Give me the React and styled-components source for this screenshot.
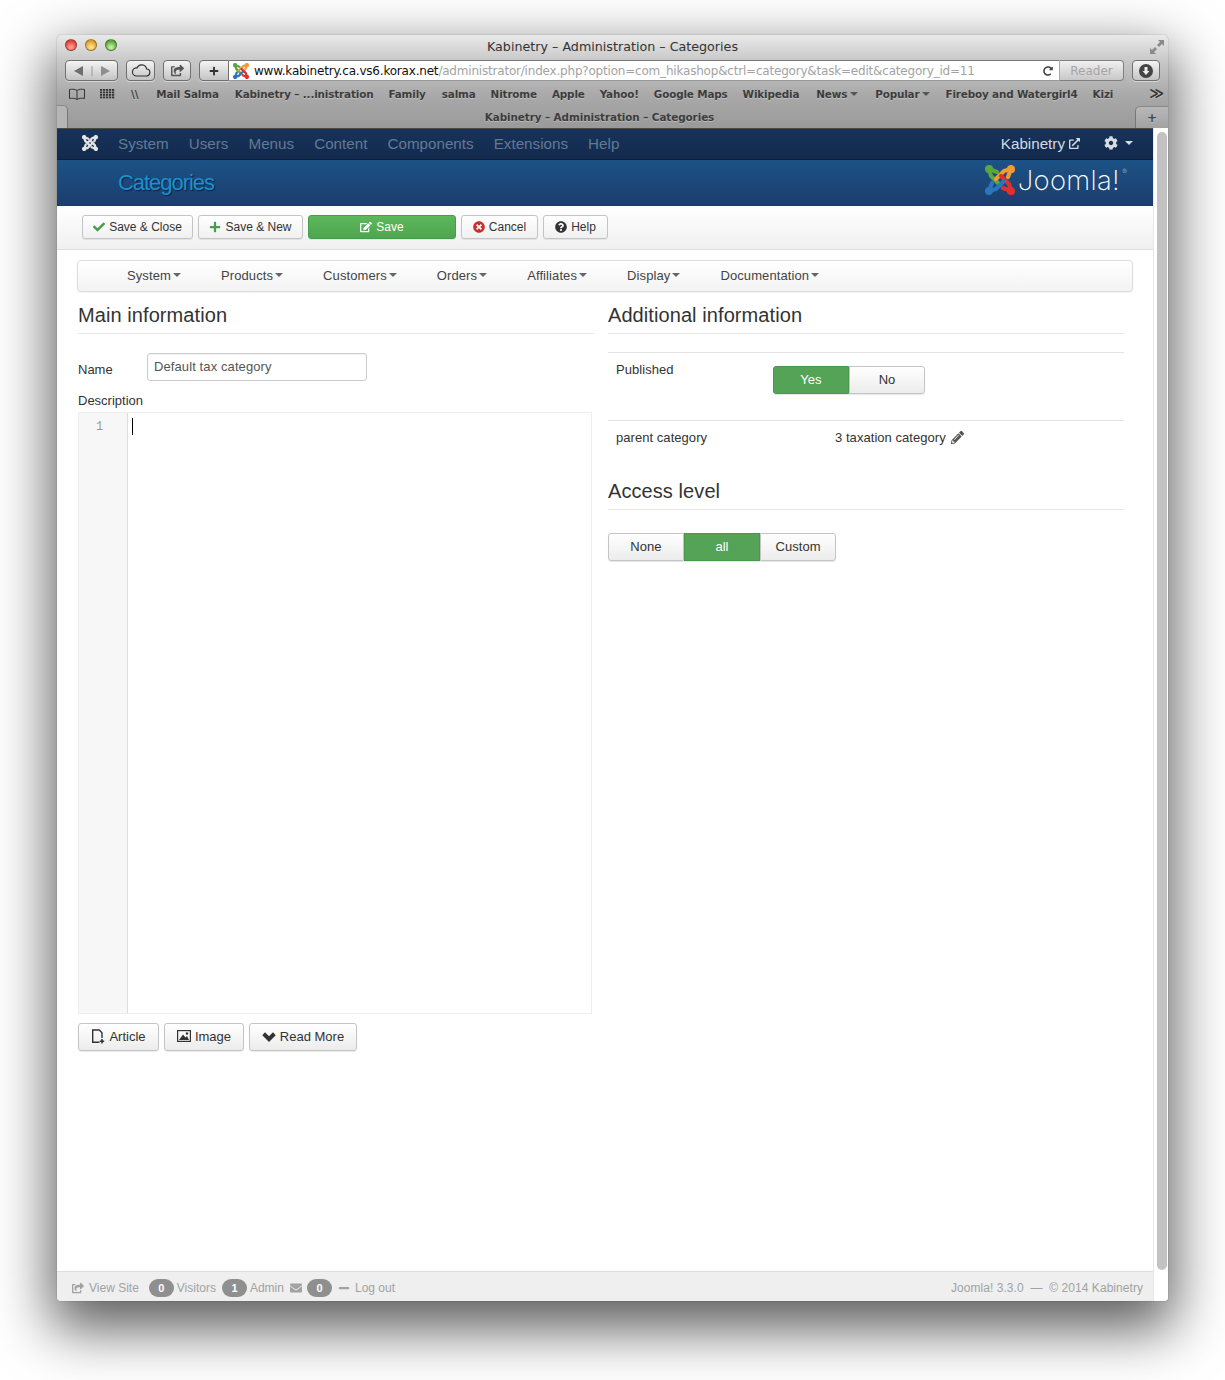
import React from "react";
import styled, { createGlobalStyle } from "styled-components";
import {
  FaCheck, FaPlus, FaEdit, FaTimesCircle, FaQuestionCircle, FaCog, FaExternalLinkAlt,
  FaShareSquare, FaEnvelope, FaMinus, FaPencilAlt, FaRedoAlt,
} from "react-icons/fa";

const Global = createGlobalStyle`
  html, body { margin: 0; padding: 0; background: #fff; }
  body { height: 1380px; overflow: hidden; font-family: "Liberation Sans", Arial, sans-serif; color: #333; }
  * { box-sizing: border-box; }
`;

const Stage = styled.div`padding: 35px 57px 0;`;
const Shadowed = styled.div`border-radius: 5px; box-shadow: 0 22px 56px 6px rgba(0,0,0,.64); width: 1111px;`;
const Win = styled.div`
  width: 1111px; height: 1266px; display: flex; flex-direction: column;
  border-radius: 5px 5px 4px 4px; overflow: hidden; box-shadow: 0 0 1px rgba(0,0,0,.6);
`;

const Chrome = styled.div`
  height: 93px; flex: none; font-family: "DejaVu Sans", sans-serif;
  background: linear-gradient(#e9e9e9 0, #c9c9c9 25px, #a9a9a9 60px, #9a9a9a 93px);
  display: flex; flex-direction: column;
`;
const TitleRow = styled.div`height: 23px; display: flex; align-items: center; padding: 0 4px 0 8px;`;
const TitleSide = styled.div`
  flex: 1; display: flex; gap: 8px; align-items: center; justify-content: ${p => (p.$end ? "flex-end" : "flex-start")};
  margin-top: ${p => p.$mt || 0}px;
`;
const Light = styled.span`
  width: 12px; height: 12px; border-radius: 50%; border: 1px solid rgba(0,0,0,.35);
  background: radial-gradient(circle at 50% 75%, ${p => p.$hi} 10%, ${p => p.$c} 70%);
`;
const WinTitle = styled.div`font-size: 12.7px; color: #333; white-space: nowrap; margin-right: 4px;`;
const AddrRow = styled.div`height: 25px; display: flex; align-items: flex-start; padding: 2px 0 0 8px;`;
const CBtn = styled.div`
  height: 21px; width: ${p => p.$w}px; margin-right: ${p => p.$mr || 0}px; flex: none;
  display: flex; align-items: center; justify-content: center; gap: 7px; color: #444;
  border: 1px solid #707070; border-radius: ${p => p.$r || "4px"};
  background: linear-gradient(#f4f4f4, #c4c4c4);
  box-shadow: 0 1px 0 rgba(255,255,255,.45);
`;
const Address = styled.div`
  height: 21px; width: 830px; flex: none; background: #fff; border-top: 1px solid #777; border-bottom: 1px solid #999;
  display: flex; align-items: center; font-size: 12px; white-space: nowrap; padding-left: 4px; gap: 5px; color: #111;
`;
const UrlDim = styled.span`color: #a3a3a3;`;
const Url = styled.span`flex: 1; min-width: 0; letter-spacing: -.2px;`;
const Reader = styled.div`
  height: 21px; width: 65px; flex: none; margin-right: 8px; color: #a5a5a5; font-size: 12px;
  display: flex; align-items: center; justify-content: center; border: 1px solid #808080; border-left: 1px solid #aaa;
  border-radius: 0 4px 4px 0; background: linear-gradient(#f0f0f0, #c8c8c8);
`;
const BookRow = styled.div`
  height: 22px; display: flex; align-items: center; padding-left: 11px; font-size: 10.4px; font-weight: 700; color: #3c3c3c;
  text-shadow: 0 1px 0 rgba(255,255,255,.3); white-space: nowrap; position: relative;
`;
const Book = styled.span`margin-right: ${p => p.$mr ?? 15}px; display: inline-flex; align-items: center; gap: 3px; letter-spacing: -.15px;`;
const More = styled.span`position: absolute; right: 4px; top: 3px; font-size: 14px; color: #333; line-height: 14px;`;
const TabRow = styled.div`
  flex: 1; display: flex; align-items: center; justify-content: center; position: relative;
  font-size: 10.4px; font-weight: 700; color: #3c3c3c; text-shadow: 0 1px 0 rgba(255,255,255,.3); letter-spacing: -.08px;
  padding: 1px 26px 0 0;
`;
const TabEdge = styled.span`
  position: absolute; bottom: 0; left: 0; width: 11px; height: 23px; border-right: 1px solid #777; border-top: 1px solid #888;
  border-radius: 0 5px 0 0; background: #b5b5b5;
`;
const TabPlus = styled.span`
  position: absolute; bottom: 0; right: 0; width: 33px; height: 22px; border-left: 1px solid #777; border-top: 1px solid #888;
  border-radius: 5px 0 0 0; background: linear-gradient(#b8b8b8, #a2a2a2); color: #444; font-size: 12px;
  display: flex; align-items: center; justify-content: center; font-weight: 700;
`;

const Body = styled.div`flex: 1; display: flex; min-height: 0; background: #fff;`;
const Page = styled.div`width: 1096px; flex: none; display: flex; flex-direction: column;`;
const Scroll = styled.div`flex: 1; background: #fff; border-left: 1px solid #e8e8e8; padding: 4px 1px 31px 3px;`;
const Thumb = styled.div`height: 100%; width: 10px; border-radius: 5px; background: #c2c2c2;`;

const TopNav = styled.div`
  height: 32px; flex: none; background: linear-gradient(#17325a, #132a4d); border-bottom: 1px solid #0c2038; border-top: 1px solid #4d4a42;
  display: flex; align-items: center; padding: 0 20px 2px 25px; font-size: 15.2px; color: #637a93;
`;
const NavGap = styled.span`width: 20px; flex: none;`;
const NavItem = styled.span`margin-right: 20.1px;`;
const NavRight = styled.span`margin-left: auto; color: #d3dae2; display: inline-flex; align-items: center; gap: 4px;`;
const Gear = styled.span`display: inline-flex; align-items: center; gap: 7px; margin-left: 24px; color: #d8dde3;`;
const Caret = styled.i`
  display: inline-block; width: 0; height: 0; border-left: 4px solid transparent; border-right: 4px solid transparent;
  border-top: 4px solid ${p => p.$c || "currentColor"};
`;
const Head = styled.div`
  height: 46px; flex: none; background: linear-gradient(#1c5286, #1c3d6c);
  display: flex; align-items: center; justify-content: space-between; padding: 0 33px 0 61px;
`;
const HeadTitle = styled.h1`
  margin: 0; font-size: 22px; font-weight: 400; color: #1c8fd0; letter-spacing: -1.05px; text-shadow: 1px 1px 1px #0b2440;
`;
const Logo = styled.div`display: flex; align-items: center; gap: 3px; margin-bottom: 7px;`;
const LogoText = styled.span`
  font-family: Inter, sans-serif; font-weight: 200; font-size: 27.5px; color: #fff; letter-spacing: .3px; line-height: 30px; position: relative;
`;
const Reg = styled.sup`font-size: 7px; position: absolute; top: 3px; right: -7px; line-height: 7px; color: #cbd6e2; letter-spacing: 0;`;

const Toolbar = styled.div`
  height: 44px; flex: none; background: linear-gradient(#fff, #f0f0f0); border-bottom: 1px solid #ddd;
  display: flex; align-items: flex-start; gap: 5px; padding: 9px 0 0 25px;
`;
const TBtn = styled.div`
  width: ${p => p.$w}px; height: 24px; border-radius: 3px; font-size: 12px;
  display: flex; align-items: center; justify-content: center; gap: 4px; white-space: nowrap;
  color: ${p => (p.$green ? "#fff" : "#333")};
  border: 1px solid ${p => (p.$green ? "#459c4a" : "#c4c4c4")};
  background: ${p => (p.$green ? "linear-gradient(#5cb85c, #4ea54f)" : "linear-gradient(#fff, #f0f0f0)")};
  box-shadow: 0 1px 1px rgba(0,0,0,.07);
  svg { flex: none; }
`;

const SubNav = styled.div`
  height: 32px; margin: 10px 20px 0; flex: none; display: flex; align-items: center; padding: 0 0 2px 29px;
  border: 1px solid #ddd; border-radius: 4px; background: linear-gradient(#fff, #f3f3f3); font-size: 13px; color: #444;
  box-shadow: 0 1px 2px rgba(0,0,0,.06); letter-spacing: .1px;
`;
const SubItem = styled.span`padding: 0 20px; display: inline-flex; align-items: center; gap: 2px;`;

const Columns = styled.div`flex: 1; display: flex; padding: 0 0 0 20px; min-height: 0;`;
const Left = styled.div`width: 516px; flex: none; margin-left: 1px; margin-right: 14px;`;
const Right = styled.div`width: 516px; flex: none;`;
const H3 = styled.h3`
  margin: 0; height: ${p => p.$h}px; padding-top: ${p => p.$pt}px; font-size: 20px; line-height: 24px; font-weight: 400; color: #333;
  border-bottom: 1px solid #e6e6e6; letter-spacing: .08px;
`;
const NameRow = styled.div`display: flex; align-items: flex-start; margin-top: 19px; font-size: 13px;`;
const NameLabel = styled.label`width: 69px; padding-top: 9px; color: #333;`;
const TextInput = styled.div`
  width: 220px; height: 28px; border: 1px solid #ccc; border-radius: 3px; color: #555; font-size: 13px; letter-spacing: .1px;
  padding: 0 6px; line-height: 25px; box-shadow: inset 0 1px 1px rgba(0,0,0,.05);
`;
const DescLabel = styled.div`font-size: 13px; line-height: 16px; margin-top: 12px; height: 19px;`;
const Editor = styled.div`width: 514px; height: 602px; display: flex; border: 1px solid #eee;`;
const Gutter = styled.div`
  width: 49px; flex: none; background: #f7f7f7; border-right: 1px solid #ddd; color: #999; font: 12px/28px "Liberation Mono", monospace;
  padding-left: 17px;
`;
const Caret2 = styled.div`width: 1px; height: 17px; background: #000; margin: 5px 0 0 4px;`;
const EdBtns = styled.div`display: flex; gap: 5px; margin-top: 9px;`;
const EdBtn = styled.div`
  width: ${p => p.$w}px; height: 28px; border: 1px solid #c4c4c4; border-radius: 3px; font-size: 13px; color: #333; padding-bottom: 2px;
  display: flex; align-items: center; justify-content: center; gap: 4px;
  background: linear-gradient(#fff, #ececec); box-shadow: 0 1px 1px rgba(0,0,0,.08);
`;
const Row = styled.div`
  height: ${p => p.$h}px; margin-top: ${p => p.$mt || 0}px; border-top: 1px solid #e3e3e3; display: flex; align-items: flex-start; font-size: 13px; letter-spacing: .05px;
`;
const RowLabel = styled.div`width: ${p => p.$w}px; padding: ${p => p.$t}px 0 0 8px;`;
const Toggle = styled.div`
  display: flex; margin-top: ${p => p.$mt || 0}px; width: fit-content; border-radius: 3px; box-shadow: 0 1px 1px rgba(0,0,0,.1);
`;
const TogBtn = styled.div`
  width: 76px; height: 28px; display: flex; align-items: center; justify-content: center; font-size: 13px; padding-bottom: 2px; letter-spacing: .05px;
  color: ${p => (p.$on ? "#fff" : "#333")};
  background: ${p => (p.$on ? "#54a357" : "linear-gradient(#fff, #ececec)")};
  border: 1px solid ${p => (p.$on ? "#4a974d" : "#c4c4c4")};
  border-radius: ${p => (p.$first ? "3px 0 0 3px" : p.$last ? "0 3px 3px 0" : "0")};
`;
const ParentVal = styled.div`padding-top: 9px; display: flex; align-items: center; gap: 5px;`;

const Foot = styled.div`
  height: 30px; flex: none; background: #efefef; border-top: 1px solid #ddd; color: #a2a2a2; font-size: 12px;
  display: flex; align-items: center; padding: 2px 10px 0 15px; gap: 3px;
`;
const Badge = styled.span`
  width: 25px; height: 18px; border-radius: 9px; background: #8f8f8f; color: #fff; font-size: 11px; font-weight: 700;
  display: inline-flex; align-items: center; justify-content: center; margin-left: ${p => p.$ml || 0}px;
`;
const FootLink = styled.span`display: inline-flex; align-items: center; gap: 5px; margin-left: ${p => p.$ml || 0}px;`;
const Copy = styled.span`margin-left: auto; letter-spacing: .05px;`;

const JoomlaMark = ({ s = 30, mono }) => {
  const c = mono ? ["#e4e4e4", "#e4e4e4", "#e4e4e4", "#e4e4e4"] : ["#5aa63f", "#f09a36", "#e0312f", "#2a75bb"];
  return (
    <svg width={s} height={s} viewBox="0 0 30 30" fill="none" strokeWidth="4.200" strokeLinecap="round" strokeLinejoin="round">
      {c.map((col, i) => (
        <g key={i} transform={`rotate(${i * 90} 15 15)`} stroke={col}>
          <path d="M4 4 L6 11 L14 19" />
          <path d="M4 4 L12 7" />
          <circle cx="4" cy="4" r="2" fill={col} />
        </g>
      ))}
    </svg>
  );
};

const Cloud = () => (
  <svg width="20" height="13" viewBox="0 0 20 13" fill="none" stroke="#333" strokeWidth="1.200">
    <path d="M5 12h10a3.500 3.500 0 0 0 .6-7A5 5 0 0 0 6 4 4 4 0 0 0 5 12z" />
  </svg>
);
const ArticleIcon = () => (
  <svg width="14" height="15" viewBox="0 0 14 15" fill="none" stroke="#333" strokeWidth="1.400">
    <path d="M8.500 13.300H1.700V1h6.600L11 3.700V9" />
    <path d="M11 10v4.500M8.800 12.300h4.400" strokeWidth="1.600" />
  </svg>
);
const ImageIcon = () => (
  <svg width="14" height="12" viewBox="0 0 14 12">
    <rect x=".6" y=".6" width="12.800" height="10.800" fill="none" stroke="#333" strokeWidth="1.200" />
    <path d="M2 10 6 4.500 8.500 7.500 10 6l2 4z" fill="#333" />
    <circle cx="10" cy="3.500" r="1.200" fill="#333" />
  </svg>
);
const HeavyChevron = () => (
  <svg width="14" height="11" viewBox="0 0 14 11" fill="#333">
    <path d="M7 11 .3 4.300 3 1.300l4 4 4-4 2.700 3z" />
  </svg>
);
const BookIcon = () => (
  <svg width="18" height="12" viewBox="0 0 18 12" fill="none" stroke="#333" strokeWidth="1">
    <path d="M9 2.500C7 1 4 1 1.500 1.500V10.500C4 10 7 10 9 11.500 11 10 14 10 16.500 10.500V1.500C14 1 11 1 9 2.500zM9 2.500V11.500" />
  </svg>
);
const GridIcon = () => (
  <svg width="15" height="10" viewBox="0 0 15 10" fill="#333">
    {[0, 2.5, 5, 7.5].map(y => [0, 3, 6, 9, 12].map(x => <rect key={`${x}-${y}`} x={x} y={y} width="2.200" height="1.800" />))}
  </svg>
);
const ResizeIcon = () => (
  <svg width="14" height="14" viewBox="0 0 14 14" fill="#8a8a8a"><path d="M14 0v6l-2-2-3 3-2-2 3-3-2-2zM0 14V8l2 2 3-3 2 2-3 3 2 2z" /></svg>
);
const BackForward = () => (
  <svg width="36" height="10" viewBox="0 0 36 10">
    <path d="M0 5 9 0v10z" fill="#6e6e6e" />
    <path d="M27 0l9 5-9 5z" fill="#8e8e8e" />
    <rect x="17.500" y="-2" width="1" height="14" fill="#999" />
  </svg>
);
const Download = () => (
  <svg width="14" height="14" viewBox="0 0 14 14"><circle cx="7" cy="7" r="7" fill="#444" /><path d="M5.500 3h3v4h2L7 11 3.500 7h2z" fill="#eee" /></svg>
);

const books = [
  ["Mail Salma", 16], ["Kabinetry – ...inistration", 15], ["Family", 16], ["salma", 15], ["Nitrome", 15],
  ["Apple", 15], ["Yahoo!", 15], ["Google Maps", 15], ["Wikipedia", 17],
];
const nav = ["System", "Users", "Menus", "Content", "Components", "Extensions", "Help"];
const sub = ["System", "Products", "Customers", "Orders", "Affiliates", "Display", "Documentation"];

export default function App() {
  return (
    <Stage>
      <Global />
      <Shadowed>
        <Win>
          <Chrome>
            <TitleRow>
              <TitleSide $mt={-3}>
                <Light $c="#e0443e" $hi="#ff9a8f" />
                <Light $c="#e0a030" $hi="#ffe08a" />
                <Light $c="#5fa83d" $hi="#bff09a" />
              </TitleSide>
              <WinTitle>Kabinetry – Administration – Categories</WinTitle>
              <TitleSide $end><ResizeIcon /></TitleSide>
            </TitleRow>
            <AddrRow>
              <CBtn $w={53} $mr={8}><BackForward /></CBtn>
              <CBtn $w={29} $mr={8}><Cloud /></CBtn>
              <CBtn $w={28} $mr={8}><FaShareSquare size={13} color="#555" /></CBtn>
              <CBtn $w={30} $r="4px 0 0 4px"><FaPlus size={10} color="#333" /></CBtn>
              <Address>
                <JoomlaMark s={16} />
                <Url>www.kabinetry.ca.vs6.korax.net<UrlDim>/administrator/index.php?option=com_hikashop&amp;ctrl=category&amp;task=edit&amp;category_id=11</UrlDim></Url>
                <FaRedoAlt size={10} color="#444" style={{ marginRight: 6 }} />
              </Address>
              <Reader>Reader</Reader>
              <CBtn $w={28}><Download /></CBtn>
            </AddrRow>
            <BookRow>
              <Book $mr={14}><BookIcon /></Book>
              <Book $mr={16}><GridIcon /></Book>
              <Book $mr={18}>\\</Book>
              {books.map(([b, m]) => <Book key={b} $mr={m}>{b}</Book>)}
              <Book $mr={17}>News <Caret $c="#555" /></Book>
              <Book $mr={15}>Popular <Caret $c="#555" /></Book>
              <Book $mr={15}>Fireboy and Watergirl4</Book>
              <Book>Kizi</Book>
              <More>≫</More>
            </BookRow>
            <TabRow>
              <TabEdge />
              Kabinetry – Administration – Categories
              <TabPlus>+</TabPlus>
            </TabRow>
          </Chrome>
          <Body>
            <Page>
              <TopNav>
                <JoomlaMark s={16} mono />
                <NavGap />
                {nav.map(n => <NavItem key={n}>{n}</NavItem>)}
                <NavRight>Kabinetry <FaExternalLinkAlt size={11} /></NavRight>
                <Gear><FaCog size={14} /><Caret /></Gear>
              </TopNav>
              <Head>
                <HeadTitle>Categories</HeadTitle>
                <Logo>
                  <JoomlaMark s={30} />
                  <LogoText>Joomla!<Reg>®</Reg></LogoText>
                </Logo>
              </Head>
              <Toolbar>
                <TBtn $w={111}><FaCheck size={12} color="#4a9b4d" /> Save &amp; Close</TBtn>
                <TBtn $w={105}><FaPlus size={12} color="#4a9b4d" /> Save &amp; New</TBtn>
                <TBtn $w={148} $green><FaEdit size={12} /> Save</TBtn>
                <TBtn $w={77}><FaTimesCircle size={12} color="#c9302c" /> Cancel</TBtn>
                <TBtn $w={65}><FaQuestionCircle size={12} color="#333" /> Help</TBtn>
              </Toolbar>
              <SubNav>
                {sub.map(s => <SubItem key={s}>{s}<Caret $c="#666" /></SubItem>)}
              </SubNav>
              <Columns>
                <Left>
                  <H3 $h={42} $pt={11}>Main information</H3>
                  <NameRow>
                    <NameLabel>Name</NameLabel>
                    <TextInput>Default tax category</TextInput>
                  </NameRow>
                  <DescLabel>Description</DescLabel>
                  <Editor>
                    <Gutter>1</Gutter>
                    <Caret2 />
                  </Editor>
                  <EdBtns>
                    <EdBtn $w={81}><ArticleIcon /> Article</EdBtn>
                    <EdBtn $w={80}><ImageIcon /> Image</EdBtn>
                    <EdBtn $w={108}><HeavyChevron /> Read More</EdBtn>
                  </EdBtns>
                </Left>
                <Right>
                  <H3 $h={42} $pt={11}>Additional information</H3>
                  <Row $h={68} $mt={18}>
                    <RowLabel $w={165} $t={9}>Published</RowLabel>
                    <Toggle $mt={13}>
                      <TogBtn $first $on>Yes</TogBtn>
                      <TogBtn $last>No</TogBtn>
                    </Toggle>
                  </Row>
                  <Row $h={48}>
                    <RowLabel $w={227} $t={9}>parent category</RowLabel>
                    <ParentVal>3 taxation category <FaPencilAlt size={13} color="#555" /></ParentVal>
                  </Row>
                  <H3 $h={42} $pt={11}>Access level</H3>
                  <Toggle $mt={23}>
                    <TogBtn $first>None</TogBtn>
                    <TogBtn $on>all</TogBtn>
                    <TogBtn $last>Custom</TogBtn>
                  </Toggle>
                </Right>
              </Columns>
              <Foot>
                <FootLink><FaShareSquare size={12} /> View Site</FootLink>
                <Badge $ml={7}>0</Badge> Visitors
                <Badge $ml={3}>1</Badge> Admin
                <FootLink $ml={3}><FaEnvelope size={12} /></FootLink>
                <Badge $ml={2}>0</Badge>
                <FootLink $ml={3}><FaMinus size={12} /> Log out</FootLink>
                <Copy>Joomla! 3.3.0 &nbsp;—&nbsp; © 2014 Kabinetry</Copy>
              </Foot>
            </Page>
            <Scroll><Thumb /></Scroll>
          </Body>
        </Win>
      </Shadowed>
    </Stage>
  );
}
